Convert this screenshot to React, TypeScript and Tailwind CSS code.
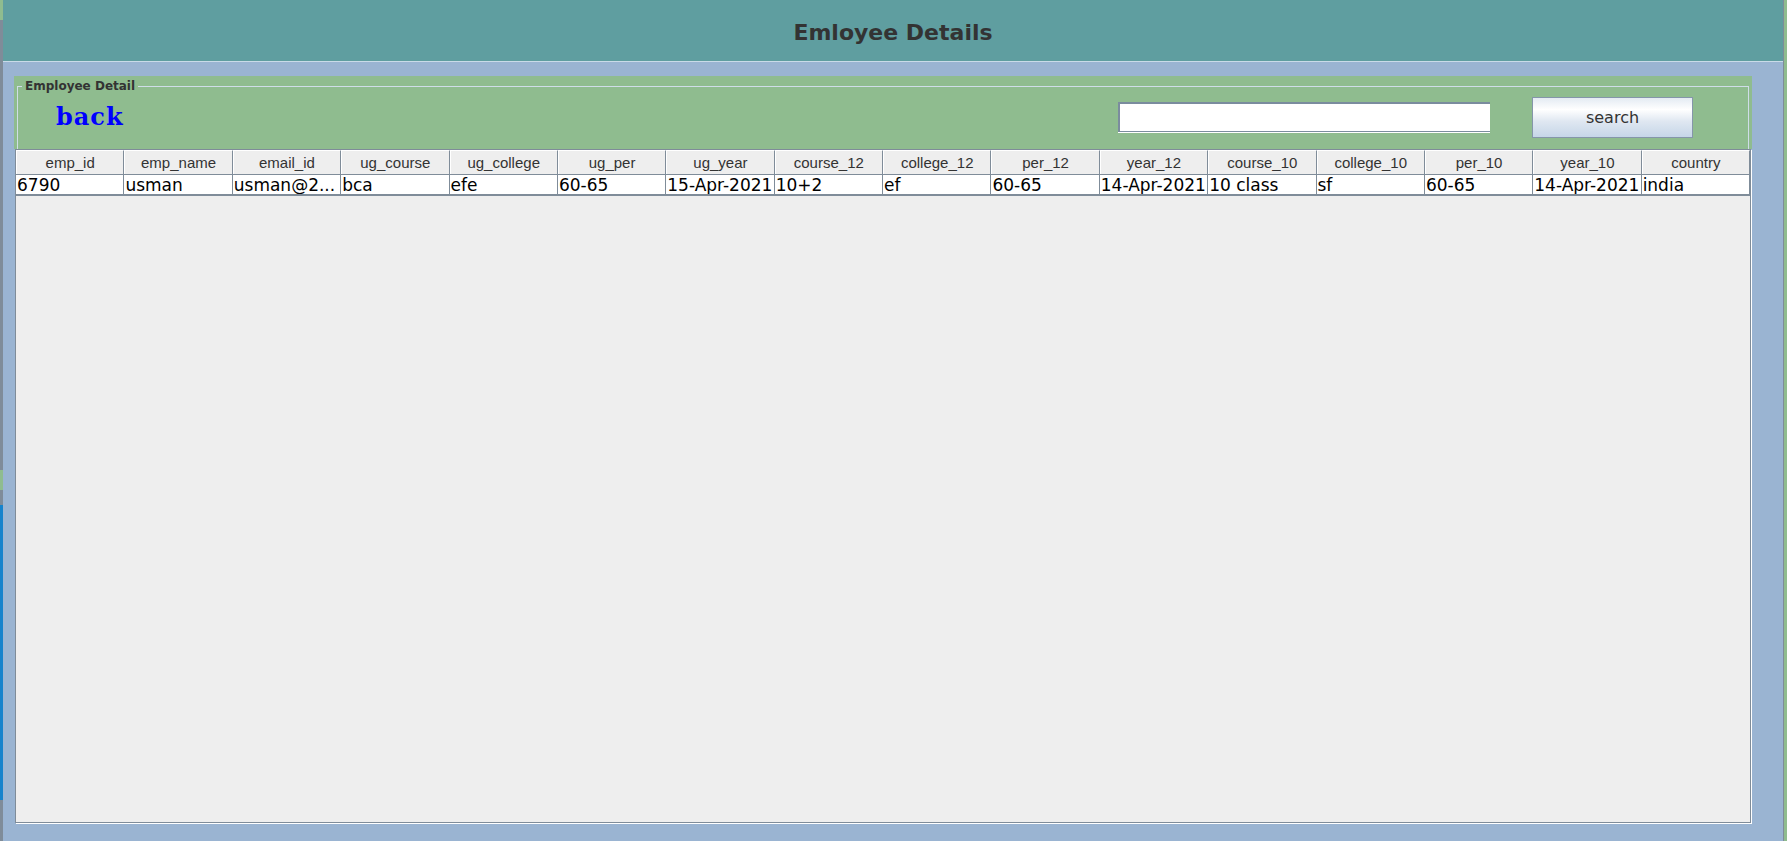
import React from 'react'

const columns = [
  'emp_id', 'emp_name', 'email_id', 'ug_course', 'ug_college', 'ug_per', 'ug_year', 'course_12',
  'college_12', 'per_12', 'year_12', 'course_10', 'college_10', 'per_10', 'year_10', 'country',
]

// la cellule email est affichée tronquée, comme dans la JTable d'origine
const rows = [
  [
    '6790', 'usman', 'usman@2...', 'bca', 'efe', '60-65', '15-Apr-2021', '10+2',
    'ef', '60-65', '14-Apr-2021', '10 class', 'sf', '60-65', '14-Apr-2021', 'india',
  ],
]

export default function App() {
  return (
    <div className="flex h-[841px] w-full overflow-hidden bg-[#9ab4d2]">
      {/* bord gauche (fenêtre derrière) */}
      <div className="flex w-[3px] shrink-0 flex-col">
        <div className="h-[20px] bg-[#8fbc8f]" />
        <div className="h-[450px] bg-[#7f8c99]" />
        <div className="h-[20px] bg-[#8fbc8f]" />
        <div className="h-[15px] bg-[#7f8c99]" />
        <div className="h-[295px] bg-[#1683cc]" />
        <div className="flex-1 bg-[#7f8c99]" />
      </div>

      <div className="flex min-w-0 flex-1 flex-col">
        {/* titre */}
        <div className="flex h-[62px] shrink-0 items-center justify-center border-b border-[#c9dbe8] bg-[#5f9ea0] pt-[3px]">
          <h1 className="font-['DejaVu_Sans',sans-serif] text-[22px] font-bold text-[#333333]">Emloyee Details</h1>
        </div>

        <div className="flex flex-1 flex-col pl-[11px] pt-[14px] pb-[18px]">
          <div className="flex w-[1738px] flex-1 flex-col">
            {/* panneau vert */}
            <div className="bg-[#8fbc8f] px-[3px] pt-[2px]">
              <fieldset className="border-x border-t border-[#cfdde8] pb-[9px]">
                <legend className="ml-[4px] px-[3px] font-['DejaVu_Sans',sans-serif] text-[12px] font-bold leading-4 text-[#333333]">
                  Employee Detail
                </legend>
                <div className="flex h-[46px] items-center pl-[38px] pr-[55px]">
                  <span className="font-['DejaVu_Serif',serif] text-[24px] font-bold leading-none tracking-[1px] text-[#0000ff]">back</span>
                  <div className="flex-1" />
                  <div className="h-[30px] w-[372px] border-l-2 border-t-2 border-b border-[#7b8c9e] bg-white shadow-[0_1px_0_#ffffff]" />
                  <button className="ml-[42px] h-[41px] w-[161px] border border-[#8596aa] bg-[linear-gradient(to_bottom,#e4ebf3_0%,#ffffff_30%,#dfe7f1_60%,#c6d6e8_100%)] pt-[2px] font-['DejaVu_Sans',sans-serif] text-[16px] text-[#333333]">
                    search
                  </button>
                </div>
              </fieldset>
            </div>

            {/* tableau */}
            <div className="mx-[1px] flex-1 border border-[#7f8c99] bg-[#eeeeee] shadow-[1px_1px_0_#ffffff]">
              <div className="grid grid-cols-16 border-b border-[#7f8c99]">
                {columns.map((c) => (
                  <div
                    key={c}
                    className="flex h-[24px] items-center justify-center border-l border-r border-t border-l-white border-r-[#7f8c99] border-t-white bg-[#eeeeee] pt-[1px] font-['Liberation_Sans',sans-serif] text-[15px] text-[#333333]"
                  >
                    {c}
                  </div>
                ))}
              </div>
              {rows.map((r, i) => (
                <div key={i} className="grid grid-cols-16 border-b-2 border-[#7f8c99] bg-white">
                  {r.map((v, j) => (
                    <div
                      key={j}
                      className="h-[19px] overflow-hidden whitespace-nowrap border-r border-[#7f8c99] pl-[1px] pt-[1px] font-['DejaVu_Sans',sans-serif] text-[17px] leading-[19px] text-black"
                    >
                      {v}
                    </div>
                  ))}
                </div>
              ))}
            </div>
          </div>
        </div>
      </div>

      {/* bord droit */}
      <div className="w-[4px] shrink-0 border-l border-[#7f8c99] bg-[#8fbc8f]" />
    </div>
  )
}
